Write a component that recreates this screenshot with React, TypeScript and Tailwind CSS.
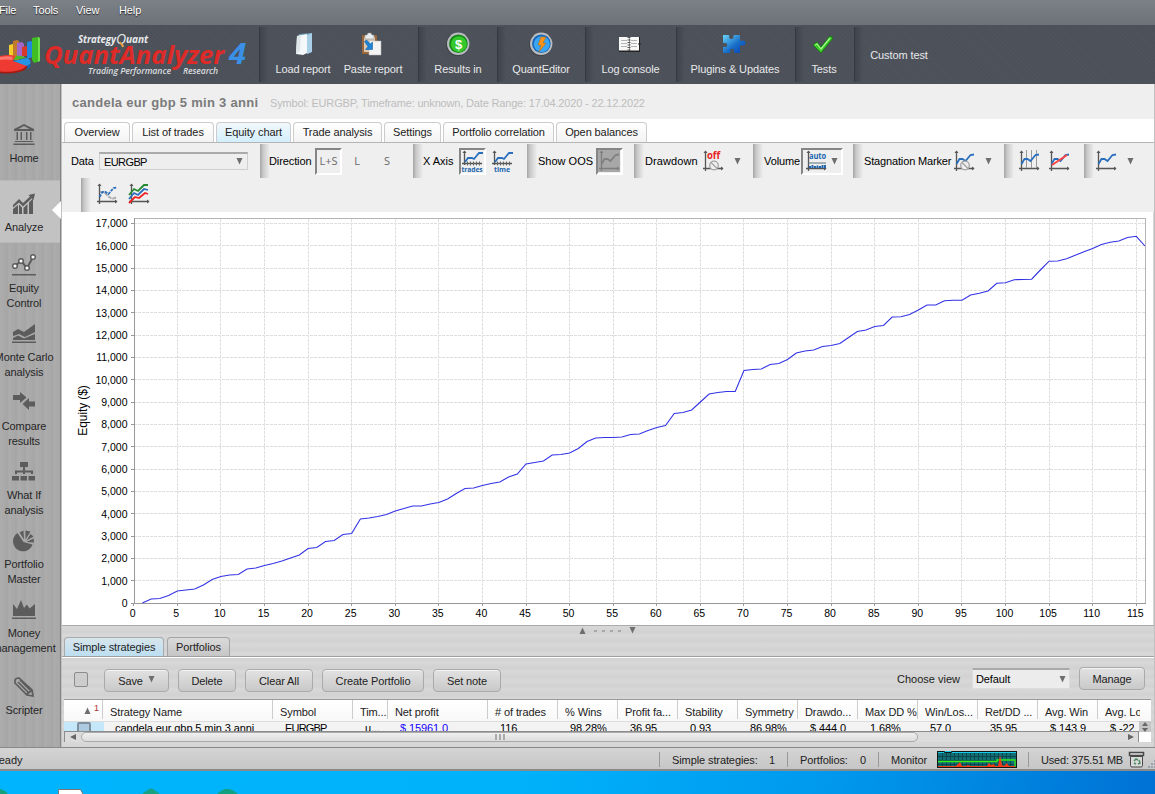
import React, { useState } from 'react'
import clsx from 'clsx'

const equity = [
  603, 599, 598.5, 595.5, 591, 590, 589, 585, 579.5, 576.5, 575, 574.5, 569, 568, 565.5, 563.5, 561, 558, 555, 548.5,
  547.5, 541.5, 540.5, 534.5, 533.5, 519, 518, 516.5, 514.5, 511, 508.5, 506, 506, 504, 502.5, 499, 493.5, 488.5, 488,
  485.5, 483.5, 482, 477, 474, 464, 462.5, 461, 455, 454.5, 453, 448.5, 441.5, 438, 437.5, 437.5, 437, 434.5, 434,
  430.5, 427.5, 425.5, 413.5, 412.5, 410, 402, 394, 392.5, 391.5, 391.5, 370.5, 369.5, 369, 364.5, 363.5, 359.5, 353,
  351, 350, 346.5, 345.5, 343.5, 337.5, 331.5, 330, 326.5, 325.5, 317, 316.8, 314.5, 310, 305, 305, 300.7, 300.3,
  300.2, 295, 293.3, 291, 283.3, 282.7, 279.7, 279.5, 279.2, 270, 261.2, 261, 258.8, 255.2, 251.7, 248.5, 244.5,
  242.3, 241, 237.5, 236.3, 246
]

const columns = [
  { title: 'Strategy Name', value: 'candela eur gbp 5 min 3 anni', width: 'w-[170px]' },
  { title: 'Symbol', value: 'EURGBP', width: 'w-[80px]' },
  { title: 'Tim...', value: 'u...', width: 'w-[35px]' },
  { title: 'Net profit', value: '$ 15961.0', width: 'w-[100px]' },
  { title: '# of trades', value: '116', width: 'w-[70px]' },
  { title: '% Wins', value: '98.28%', width: 'w-[60px]' },
  { title: 'Profit fa...', value: '36.95', width: 'w-[60px]' },
  { title: 'Stability', value: '0.93', width: 'w-[60px]' },
  { title: 'Symmetry', value: '86.98%', width: 'w-[60px]' },
  { title: 'Drawdo...', value: '$ 444.0', width: 'w-[60px]' },
  { title: 'Max DD %', value: '1.68%', width: 'w-[60px]' },
  { title: 'Win/Los...', value: '57.0', width: 'w-[60px]' },
  { title: 'Ret/DD ...', value: '35.95', width: 'w-[60px]' },
  { title: 'Avg. Win', value: '$ 143.9', width: 'w-[60px]' },
  { title: 'Avg. Lo', value: '$ -222', width: 'w-[42px]' }
]

const tabs = [
  { name: 'Overview', width: 'w-[66px]' },
  { name: 'List of trades', width: 'w-[82px]' },
  { name: 'Equity chart', width: 'w-[75px]' },
  { name: 'Trade analysis', width: 'w-[89px]' },
  { name: 'Settings', width: 'w-[57px]' },
  { name: 'Portfolio correlation', width: 'w-[111px]' },
  { name: 'Open balances', width: 'w-[91px]' }
]

function Arrow({ up = false, className = '' }: { up?: boolean; className?: string }) {
  return (
    <svg width="7" height="7" viewBox="0 0 7 7" className={clsx('shrink-0', className)}>
      <path d={up ? 'M3.5 0.500 6.500 7H.5z' : 'M.5 0h6L3.5 6.500z'} fill="#6e6e6e" />
    </svg>
  )
}

/* ---------- Top bar ---------- */

function Logo() {
  return (
    <svg width="259" height="59" viewBox="0 25 259 59" className="shrink-0">
      <path d="M9 45l4-1v16H9z" fill="#f4cf2c" />
      <path d="M13 41l4-1 2 1v19h-6z" fill="#c07a2c" />
      <path d="M17 43l5-1 2 2v14h-7z" fill="#a366cc" />
      <path d="M22 47l4-1 2 1v9h-6z" fill="#d8382a" />
      <path d="M27 42l4-1 2 1v15l-6 2z" fill="#2087df" />
      <path d="M32 38l6-1 2 1v23l-6 2-2-3z" fill="#40bd22" />
      <path d="M38 37l2 1v23l-2 1z" fill="#6fe04b" />
      <path d="M0 63h28q1 6-7 8.500-9 3-21 1.500z" fill="#a51912" />
      <path d="M0 56q10-2 15 0l-2 5 14 4q-3 5-14 6.500-7 .7-13 0z" fill="#ee3a30" />
      <path d="M0 57q9-1.500 13 0l-1 3q-6-1-12 0z" fill="#ff766e" />
      <path d="M13 60l4-4.500q6 0 9 2.500z" fill="#45bd26" />
      <path d="M13 61l14-3q5 2 3 6l-3 2z" fill="#2494e8" />
      <path d="M27 66l3.500-2v2.500l-3 3z" fill="#1466b5" />
      <g fontFamily="Open Sans" fontStyle="italic">
        <text x="78" y="43" fontSize="11" fontWeight="700" fill="#e8eaec" textLength="38" lengthAdjust="spacingAndGlyphs">Strategy</text>
        <text x="116" y="44" fontSize="14" fill="#e8eaec" textLength="10" lengthAdjust="spacingAndGlyphs">Q</text>
        <text x="126" y="43" fontSize="11" fontWeight="700" fill="#e8eaec" textLength="22" lengthAdjust="spacingAndGlyphs">uant</text>
        <path d="M120 42l3 5" stroke="#e99b2e" strokeWidth="1.5" />
        <text x="44" y="63.500" fontSize="25" fontWeight="700" fill="#de2b28" textLength="180" lengthAdjust="spacingAndGlyphs">QuantAnalyzer</text>
        <text x="229" y="63.500" fontSize="28" fontWeight="700" fill="#3a8fe6" textLength="17" lengthAdjust="spacingAndGlyphs">4</text>
        <text x="88" y="74" fontSize="9.5" fontWeight="600" fill="#d9dcdf" textLength="83" lengthAdjust="spacingAndGlyphs">Trading Performance</text>
        <text x="183" y="74" fontSize="9.5" fontWeight="600" fill="#d9dcdf" textLength="35" lengthAdjust="spacingAndGlyphs">Research</text>
      </g>
    </svg>
  )
}

const LoadIcon = () => (
  <svg width="24" height="24" viewBox="-3 0 24 24">
    <path d="M5 2l13-1v18l-4 3z" fill="#6f9fbf" />
    <path d="M3 4l10-2v19l-4 2-7-1z" fill="#f5f8fa" />
    <path d="M13 3l5-2v19l-5 2z" fill="#a9cfe6" />
    <path d="M3 4l4-1-1 16-4 3z" fill="#dfe6ea" />
  </svg>
)

const PasteIcon = () => (
  <svg width="24" height="24" viewBox="1 0 24 24">
    <rect x="2" y="3" width="15" height="19" rx="1" fill="#9b663a" />
    <rect x="4" y="5" width="11" height="15" fill="#d8c9b6" />
    <path d="M5 3h2l1-2h3l1 2h2v4H5z" fill="#e9ecee" stroke="#888" strokeWidth=".5" />
    <path d="M9 9h12v14H9z" fill="#f4f4f4" stroke="#bbb" strokeWidth=".5" />
    <path d="M4.500 9.500l2-1.500 4 4 2-2v7.500H5.500l2.500-3z" fill="#1b84d8" stroke="#0b4f8a" strokeWidth=".5" />
  </svg>
)

function CoinIcon({ blue = false }: { blue?: boolean }) {
  return (
    <svg width="24" height="24" viewBox="0 0 24 24">
      <circle cx="11.5" cy="12.5" r="11.5" fill="#3f4347" />
      <circle cx="12.2" cy="11.8" r="11.2" fill="#b9bcc0" />
      <circle cx="12.4" cy="11.7" r="9.3" fill={blue ? '#1565b8' : '#118512'} />
      <circle cx="12.8" cy="12.2" r="8" fill={blue ? '#3aa5f3' : '#35c82c'} />
      {blue ? (
        <path d="M12 5h5l-3 6h3l-7 9 2-7H9z" fill="#ff9416" stroke="#a86418" strokeWidth=".5" />
      ) : (
        <text x="12.500" y="16.500" fontSize="13" fontWeight="700" fill="#fff" textAnchor="middle">$</text>
      )}
    </svg>
  )
}

const LogIcon = () => (
  <svg width="24" height="24" viewBox="1 -1 24 24">
    <path d="M2 4h21v15H2z" fill="#222" />
    <path d="M2 4h10v13.500H2zM12.500 4H22v13.500h-9.500z" fill="#f7f7f7" />
    <path d="M4 7.500h6M4 10.500h6M4 13.500h6M14 7.500h6M14 10.500h6M14 13.500h6" stroke="#b3b3b3" />
    <path d="M12 4v14" stroke="#555" strokeWidth="3" strokeDasharray="1 1.5" />
    <path d="M21.500 11h2" stroke="#222" strokeWidth="2" />
  </svg>
)

const PuzzleIcon = () => (
  <svg width="24" height="24" viewBox="1 0 24 24">
    <defs>
      <linearGradient id="puzzle" x1="0" y1="0" x2="1" y2="1">
        <stop offset="0" stopColor="#6ad3f5" />
        <stop offset=".55" stopColor="#176dc8" />
        <stop offset="1" stopColor="#063fae" />
      </linearGradient>
    </defs>
    <path
      d="M1 3h5q2 0 1.200 2c-.8 2.600 5 2.600 4.200 0Q10.800 3 13 3h5v5q0 1.500 2 .8c4-1.500 5 5 1 4.800-2.400-.6-3-.2-3 1.600V21h-5q-1.600 0-1-2c.8-3-4.600-3-3.600 0q.6 2-1.400 2H1v-5q0-1.600 2-1c3 .6 3-4.600 0-4q-2 .6-2-1z"
      fill="url(#puzzle)"
    />
  </svg>
)

const CheckIcon = () => (
  <svg width="24" height="24" viewBox="1 -1 24 24">
    <path d="M2 12l4-3 4 5L19 3l3 2-12 15z" fill="#39c927" stroke="#12790d" strokeWidth=".8" />
    <path d="M4 12l2-1 4 5 9-11" fill="none" stroke="#a4f48e" strokeWidth="1.2" />
  </svg>
)

function TopButton({ label, icon, className }: { label: string; icon: React.ReactNode; className?: string }) {
  return (
    <button className={clsx('flex shrink-0 flex-col items-center whitespace-nowrap text-[#e8e9ea]', className)}>
      {icon}
      <span className="mt-[6px] leading-[14px]">{label}</span>
    </button>
  )
}

function TopGroup({ className, children }: { className: string; children?: React.ReactNode }) {
  return (
    <div className={clsx('flex shrink-0 justify-center border-l border-[#353a41] bg-[linear-gradient(90deg,#3f444c,transparent_8px)] pt-[5px]', className)}>
      {children}
    </div>
  )
}

function TopBar() {
  return (
    <div className="flex h-[59px] shrink-0 bg-[#4b5059] bg-[repeating-linear-gradient(45deg,#ffffff05_0px,#ffffff05_1px,transparent_1px,transparent_3px)]">
      <Logo />
      <div className="flex py-[2px]">
        <TopGroup className="w-[159px] pr-[1px]">
          <TopButton label="Load report" icon={<LoadIcon />} className="w-[57px]" />
          <TopButton label="Paste report" icon={<PasteIcon />} className="ml-3 w-[59px]" />
        </TopGroup>
        <TopGroup className="w-[79px]"><TopButton label="Results in" icon={<CoinIcon />} /></TopGroup>
        <TopGroup className="w-[88px] pr-px"><TopButton label="QuantEditor" icon={<CoinIcon blue />} /></TopGroup>
        <TopGroup className="w-[91px] pr-px"><TopButton label="Log console" icon={<LogIcon />} /></TopGroup>
        <TopGroup className="w-[119px] pr-[2px]"><TopButton label="Plugins & Updates" icon={<PuzzleIcon />} /></TopGroup>
        <TopGroup className="w-[59px] pr-[2px]"><TopButton label="Tests" icon={<CheckIcon />} /></TopGroup>
        <TopGroup className="w-[90px] items-center pr-px"><span className="mb-[5px] text-[#e8e9ea]">Custom test</span></TopGroup>
      </div>
    </div>
  )
}

/* ---------- Sidebar ---------- */

const sidebarItems = [
  {
    lines: ['Home'],
    box: 'h-[68px] pt-[11px]',
    icon: <path d="M12 1 22 6v2H2V6zM4.500 9h1.500v8H4.500zM8.500 9H10v8H8.500zM14 9h1.500v8H14zM18 9h1.500v8H18zM3 18h18v1H3zM1.500 20.500h21V22h-21zM12 3 6.500 6h11z" fillRule="evenodd" />
  },
  {
    lines: ['Analyze'],
    box: 'h-[63px] pt-[11px]',
    icon: <path d="M1 17l5-4v9H1zM7 12.500l3 3V22H7zM11.500 16l4-4v10h-4zM17 10.500l4-4V22h-4zM1 13l6-6 4 4 7-6.500L16.500 3 23 1.500 21.500 8l-1.700-1.700L11 14.500l-4-4-6 5z" />
  },
  {
    lines: ['Equity', 'Control'],
    box: 'h-[69px] pt-[10px]',
    icon: (
      <g>
        <path d="M3 13l6-5 6 7 6-11" fill="none" stroke="#5c5c5c" strokeWidth="2" />
        <g fill="#fff" stroke="#5c5c5c" strokeWidth="1.500">
          <circle cx="3" cy="13" r="2.300" /><circle cx="9" cy="8" r="2.300" /><circle cx="15" cy="15" r="2.300" /><circle cx="21" cy="4" r="2.300" />
        </g>
        <path d="M0 21h24v1.500H0z" />
      </g>
    )
  },
  {
    lines: ['Monte Carlo', 'analysis'],
    box: 'h-[69px] pt-[10px]',
    icon: <path d="M1 10l5-3 6 3 11-8v8l-10 5-6-3-6 2zM1 16l5-2.500 6 3L23 12v6H1zM0 19.500h24V21H0z" />
  },
  {
    lines: ['Compare', 'results'],
    box: 'h-[69px] pt-[10px]',
    icon: <path d="M1 4h7V1l6.500 5.500L8 12V9H1zM23 10.500h-6v-3.500l-6.500 6 6.500 6v-3.500h6z" />
  },
  {
    lines: ['What If', 'analysis'],
    box: 'h-[69px] pt-[10px]',
    icon: <path d="M8 2h8v5h-3v3.500h8V14h-2v-1.500h-6V14h-2v-1.500H5V14H3v-3.500h8V7H8zM0 16h7v4.500H0zM8.500 16h6.500v4.500H8.500zM16.500 16H23v4.500h-6.500z" />
  },
  {
    lines: ['Portfolio', 'Master'],
    box: 'h-[69px] pt-[10px]',
    icon: <path d="M11.500 13 5.500 4A10 10 0 1 0 20.500 15.500zM12 10.500 7.500 3.500 11.500 1.500zM13.500 10.500V1.500L18.500 2.500zM14.500 11.500 18.500 5l3 2.500zM14.500 13l7-3.500.5 4z" />
  },
  {
    lines: ['Money', 'management'],
    box: 'h-[69px] pt-[10px]',
    icon: <path d="M1 6l4 5 4-9 3 8 3-3.500 2.500 4L23 6v12H1zM0 19.500h24V21H0z" />
  },
  {
    lines: ['Scripter'],
    box: 'h-[69px] pt-[18px]',
    icon: (
      <g fill="none" stroke="#5c5c5c" strokeWidth="1.700">
        <path d="M3 6q0-3 4-3l13 12 1 6-6-1L3 8zM6 7l10 10M8 5l10 10M15 19l5-4" />
      </g>
    )
  }
]

function Sidebar() {
  return (
    <div className="relative w-[61px] shrink-0 border-r border-[#858585] bg-[#a9a9a9] bg-[repeating-linear-gradient(90deg,#ffffff08_0px,#ffffff08_2px,transparent_3px,transparent_5px,#00000006_7px,#ffffff08_9px)] pt-[28px]">
      {sidebarItems.map(item => (
        <button
          key={item.lines[0]}
          className={clsx(
            'flex w-full flex-col items-center overflow-hidden pr-[12px] whitespace-nowrap text-[#262626]',
            item.box,
            item.lines[0] === 'Analyze' && 'border-y border-[#b8b8b8] bg-[#c2c2c2]'
          )}
        >
          <svg width="24" height="24" viewBox="0 0 24 24" fill="#5c5c5c" className="shrink-0">{item.icon}</svg>
          <span className="mt-[4px] flex w-[48px] flex-col items-center">
            {item.lines.map(line => <span key={line} className="leading-[15px]">{line}</span>)}
          </span>
        </button>
      ))}
      <svg width="9" height="18" viewBox="0 0 9 18" className="absolute top-[117px] -right-px">
        <path d="M9 0v18L0 9z" fill="#fff" />
      </svg>
    </div>
  )
}

/* ---------- Chart toolbar ---------- */

type IconKind = 'plain' | 'trades' | 'time' | 'gray' | 'off' | 'auto' | 'stagnation' | 'grid' | 'trend' | 'shadow' | 'multi'

function ChartIcon({ kind = 'plain' }: { kind?: IconKind }) {
  const timeline = kind === 'trades' || kind === 'time'
  const axisY = timeline ? 13.5 : 18.5
  const gray = kind === 'gray'
  const axis = gray ? '#7d7d7d' : '#555'
  const line = gray ? '#808080' : '#2a6fbd'
  return (
    <svg width="22" height="22" viewBox="0 0 22 22" className="shrink-0 overflow-visible">
      {gray && <path d="M0 0h22v22H0z" fill="#a7a7a7" />}
      <path d={timeline ? 'M3.500 1v14M1 13.500h20' : `M3.500 1v20M1 ${axisY}h20`} stroke={axis} strokeWidth="1.300" />
      <path d="M1.500 3l2-2.500 2 2.500z" fill={axis} />
      {axisY > 15 && <path d="M19 16.500l2.500 2-2.500 2z" fill={axis} />}
      {kind === 'grid' && <path d="M8.500 0v18M13.500 0v18M18.500 0v18" stroke="#999" />}
      {kind === 'off' && <text x="5" y="9" fontSize="10" fontWeight="700" fontFamily="Open Sans" fill="#e82626" textLength="13" lengthAdjust="spacingAndGlyphs">off</text>}
      {kind === 'auto' && (
        <g>
          <text x="4" y="8.500" fontSize="8" fontWeight="700" fontFamily="Open Sans" fill="#2266b0" textLength="17" lengthAdjust="spacingAndGlyphs">auto</text>
          <path d="M3 13h18" stroke="#56707c" />
          <path d="M5 18v-2M7.500 18v-3M10 18v-2M12.500 18v-2.500M15 18v-2M17.500 18v-3M20 18v-3" stroke="#2266b0" strokeWidth="2" />
        </g>
      )}
      {kind === 'multi' && (
        <g fill="none" strokeWidth="1.800">
          <path d="M1 12l5-6 4 2 6-6h4" stroke="#248a32" />
          <path d="M1 16l5-6 4 2 6-6 4 1" stroke="#2a6fbd" />
          <path d="M1 20l6-6 4 1 6-5 3 1" stroke="#ee2222" />
        </g>
      )}
      {kind === 'shadow' && <path d="M4 9h4l4 4 4 3 5-2" fill="none" stroke="#aaa" strokeWidth="1.800" strokeDasharray="4 1" />}
      {kind !== 'off' && kind !== 'auto' && kind !== 'multi' && (
        <path d={timeline ? 'M4 12l3-4h4l2 1 5-6h4' : 'M3.500 14l3-5h3l3 2 5-6 3.500-.5'} fill="none" stroke={line} strokeWidth="1.800" strokeDasharray={kind === 'shadow' ? '3 1' : undefined} />
      )}
      {kind === 'trend' && <path d="M4 15L19 5" stroke="#f44" strokeWidth="2" />}
      {timeline && (
        <g>
          <path d="M6.500 11.500v4M9.500 11.500v4M12.500 11.500v4M15.500 11.500v4M18.500 11.500v4" stroke="#666" />
          <text x="11" y="21.500" textAnchor="middle" fontSize="7.500" fontWeight="700" fontFamily="Open Sans" fill="#2266b0" textLength={kind === 'trades' ? 21 : 16} lengthAdjust="spacingAndGlyphs">{kind}</text>
        </g>
      )}
      {(kind === 'stagnation' || kind === 'off') && (
        <g fill="#eee" stroke="#a3a3a3" strokeWidth="1.300"><circle cx="12" cy="15.500" r="4.300" /><path d="M9 12.500l6 6" /></g>
      )}
    </svg>
  )
}

function ToolGroup({ className, children }: { className: string; children: React.ReactNode }) {
  return (
    <div className={clsx('flex h-[34px] shrink-0 items-center bg-[linear-gradient(90deg,#a5a5a5,#c8c8c8_3px,#efefef_10px)] whitespace-nowrap', className)}>
      {children}
    </div>
  )
}

const pressed = 'flex h-[27px] shrink-0 items-center border-2 border-t-[#858585] border-r-white border-b-white border-l-[#858585]'

function ChartToolbar() {
  const [direction, setDirection] = useState('L+S')
  return (
    <div className="h-[69px] shrink-0 bg-[#efefef] pt-px text-black">
      <div className="flex">
        <div className="flex h-[34px] w-[198px] shrink-0 items-center pl-[9px]">
          <span className="w-[28px]">Data</span>
          <div className="flex h-[18px] w-[149px] items-center justify-between border border-t-2 border-[#d0d0d0] border-t-[#aaa] bg-[#eee] pr-[4px] pl-[4px]">
            <span className="tracking-[-0.6px]">EURGBP</span>
            <Arrow />
          </div>
        </div>
        <ToolGroup className="w-[153px] pl-[9px]">
          <span className="w-[46px]">Direction</span>
          {['L+S', 'L', 'S'].map(d => (
            <button
              key={d}
              onClick={() => setDirection(d)}
              className={clsx("shrink-0 justify-center font-['Open_Sans',sans-serif] text-[11px] text-[#6a6a6a]", direction === d ? pressed : 'h-[27px]', d === 'L+S' ? 'w-[27px]' : 'w-[30px]')}
            >
              {d}
            </button>
          ))}
        </ToolGroup>
        <ToolGroup className="w-[114px] pl-[10px]">
          <span className="w-[36px] tracking-normal">X Axis</span>
          <span className={clsx(pressed, 'w-[27px]')}><ChartIcon kind="trades" /></span>
          <span className="ml-[5px]"><ChartIcon kind="time" /></span>
        </ToolGroup>
        <ToolGroup className="w-[107px] pl-[11px]">
          <span className="w-[58px] tracking-normal">Show OOS</span>
          <span className={clsx(pressed, 'w-[27px]')}><ChartIcon kind="gray" /></span>
        </ToolGroup>
        <ToolGroup className="w-[119px] pl-[11px]">
          <span className="w-[57px] tracking-[0.1px]">Drawdown</span>
          <ChartIcon kind="off" />
          <Arrow className="ml-[10px]" />
        </ToolGroup>
        <ToolGroup className="w-[100px] pl-[11px]">
          <span className="w-[37px]">Volume</span>
          <span className={clsx(pressed, 'w-[42px] pl-[2px]')}>
            <ChartIcon kind="auto" />
            <Arrow className="ml-[4px]" />
          </span>
        </ToolGroup>
        <ToolGroup className="w-[151px] pl-[11px]">
          <span className="w-[89px] tracking-[-0.15px]">Stagnation Marker</span>
          <ChartIcon kind="stagnation" />
          <Arrow className="ml-[10px]" />
        </ToolGroup>
        <ToolGroup className="w-[80px] gap-[8px] pl-[14px]">
          <ChartIcon kind="grid" />
          <ChartIcon kind="trend" />
        </ToolGroup>
        <ToolGroup className="w-[66px] pl-[11px]">
          <ChartIcon />
          <Arrow className="ml-[10px]" />
        </ToolGroup>
      </div>
      <ToolGroup className="ml-[19px] gap-[10px] pb-[2px] pl-[15px]">
        <ChartIcon kind="shadow" />
        <ChartIcon kind="multi" />
      </ToolGroup>
    </div>
  )
}

/* ---------- Equity chart ---------- */

function EquityChart() {
  const px = (i: number) => 133.7 + i * 8.718
  const py = (v: number) => 603 - v * 22.33
  const xTicks = Array.from({ length: 24 }, (_, i) => i * 5)
  const yTicks = Array.from({ length: 18 }, (_, i) => i)
  return (
    <svg width="1091" height="413" viewBox="62 212 1091 413" className="block shrink-0 bg-white">
      <g stroke="#dedede" strokeDasharray="2.500 1.500" shapeRendering="crispEdges">
        {xTicks.slice(1).map(t => <path key={t} d={`M${Math.floor(px(t)) + 0.5} 219V603`} />)}
        {yTicks.slice(1).map(t => <path key={t} d={`M134 ${Math.floor(py(t)) + 0.5}H1145`} />)}
      </g>
      <g stroke="#999" shapeRendering="crispEdges">
        {xTicks.map(t => <path key={t} d={`M${Math.floor(px(t)) + 0.5} 603v3`} />)}
        {yTicks.map(t => <path key={t} d={`M131 ${Math.floor(py(t)) + 0.5}h3`} />)}
      </g>
      <rect x="134.5" y="218.5" width="1011" height="385" fill="none" stroke="#b4b4b4" />
      <path d="M134.500 218v386M134 603.500h1012" stroke="#999" />
      <g fontSize="10.500" fill="#000" className="tracking-normal">
        {xTicks.map(t => <text key={t} x={px(t) - 1} y="617" textAnchor="middle">{t}</text>)}
        {yTicks.map(t => <text key={t} x="127.500" y={py(t) + 4} textAnchor="end">{(t * 1000).toLocaleString('en-US')}</text>)}
      </g>
      <text transform="translate(87 410.5) rotate(-90)" textAnchor="middle" fontSize="12" fill="#000">Equity ($)</text>
      <polyline points={equity.map((y, i) => `${px(i + 1)},${y}`).join(' ')} fill="none" stroke="#3232e6" strokeWidth="1.100" />
    </svg>
  )
}

/* ---------- Strategies panel ---------- */

const metal = 'bg-[#d5d5d5] bg-[repeating-linear-gradient(180deg,#ffffff14_0px,#ffffff00_3px,#00000004_6px,#ffffff0c_9px)]'

function PushButton({ className, children }: { className: string; children: React.ReactNode }) {
  return (
    <button className={clsx('flex h-[23px] shrink-0 items-center justify-center rounded-[4px] border border-[#aaa] bg-linear-to-b from-[#e2e2e2] to-[#c9c9c9] whitespace-nowrap text-[#222] shadow-[inset_0_1px_0_#f3f3f3]', className)}>
      {children}
    </button>
  )
}

function Strategies() {
  return (
    <div className={clsx('flex h-[122px] shrink-0 flex-col overflow-hidden border-t border-[#aaa]', metal)}>
      <div className="flex h-[11px] items-start justify-center gap-[8px] pt-[1px] pr-[1px]">
        <Arrow up />
        <span className="mt-[3px] flex gap-[5px]">
          {[0, 1, 2, 3].map(i => <i key={i} className="h-[2px] w-[3px] bg-[#a8a8a8]" />)}
        </span>
        <Arrow />
      </div>
      <div className="flex h-[20px] shrink-0 gap-[3px] border-b border-[#a0a0a0] pl-[2px] leading-[19px]">
        <div className="w-[100px] rounded-t-[4px] border border-b-0 border-[#aaa] bg-linear-to-b from-[#d7e5ec] to-[#bcdff2] text-center text-[#222]">Simple strategies</div>
        <div className="w-[63px] rounded-t-[4px] border border-b-0 border-[#a5a5a5] bg-linear-to-b from-[#dadada] to-[#c6c6c6] text-center text-[#222]">Portfolios</div>
      </div>
      <div className="flex h-[42px] shrink-0 items-start border-t border-white pt-[11px] pl-[12px]">
        <span className="mt-[3px] mr-[16px] h-[15px] w-[14px] rounded-[2px] border-[1.500px] border-[#8c8c8c] bg-[#cdcdcd]" />
        <PushButton className="w-[65px] gap-[5px]">Save <Arrow className="mb-[3px]" /></PushButton>
        <PushButton className="ml-[9px] w-[58px]">Delete</PushButton>
        <PushButton className="ml-[9px] w-[68px]">Clear All</PushButton>
        <PushButton className="ml-[9px] w-[102px]">Create Portfolio</PushButton>
        <PushButton className="ml-[9px] w-[68px]">Set note</PushButton>
        <span className="mt-[3px] ml-auto w-[75px] tracking-normal text-[#222]">Choose view</span>
        <div className="-mt-px flex h-[21px] w-[98px] items-center justify-between border border-t-2 border-[#dcdcdc] border-t-[#aaa] bg-[#ececec] pr-[3px] pl-[3px] text-black">
          <span>Default</span>
          <Arrow />
        </div>
        <PushButton className="-mt-[2px] mr-[9px] ml-[9px] w-[66px]">Manage</PushButton>
      </div>
      <div className="mr-[3px] ml-[2px] flex h-[43px] shrink-0 flex-col overflow-hidden border-t border-[#999] text-[#222]">
        <div className="flex h-[21px] shrink-0 bg-linear-to-b from-white to-[#f8f8f8]">
          <div className="mb-[2px] flex w-[39px] shrink-0 items-center justify-end gap-[3px] border-r border-[#ccc] pr-[3px]">
            <Arrow up className="mt-[1px]" />
            <span className="mb-[4px] text-[9px] text-[#a33]">1</span>
          </div>
          {columns.map(c => (
            <div key={c.title} className={clsx('mb-[2px] shrink-0 overflow-hidden border-r border-[#ccc] pt-[6px] pl-[7px] leading-[13px] whitespace-nowrap last:border-r-0', c.width)}>{c.title}</div>
          ))}
        </div>
        <div className="flex h-[10px] shrink-0 overflow-hidden border-t border-[#ddd] bg-[#f3f3f3] text-black">
          <div className="flex w-[40px] shrink-0 justify-center bg-[#c5e7fa]">
            <span className="h-[16px] w-[14px] rounded-[2px] border-2 border-[#80919d] bg-[#adcbe0]" />
          </div>
          {columns.map(c => (
            <div
              key={c.title}
              className={clsx(
                'shrink-0 overflow-hidden pl-[11px] leading-[13px] whitespace-nowrap last:w-[35px]',
                c.width,
                c.title === 'Net profit' && 'text-[#1500ff]',
                c.title === 'Symbol' && 'tracking-[-0.8px]'
              )}
            >
              {c.value}
            </div>
          ))}
        </div>
        <div className="flex h-[12px] shrink-0">
          <div className="flex w-[1075px] items-center border border-[#8c8c8c] bg-[#dcdcdc]">
            <svg width="16" height="8" viewBox="0 0 16 8" className="shrink-0"><path d="M11 1v6L5 4z" fill="#666" /></svg>
            <div className="flex h-[10px] w-[837px] shrink-0 items-center justify-center rounded-full border border-[#aaa] bg-linear-to-b from-[#efefef] to-[#ddd]">
              <span className="flex gap-[2px]">
                {[0, 1, 2].map(i => <i key={i} className="h-[6px] w-[2px] bg-[#aaa]" />)}
              </span>
            </div>
            <svg width="12" height="8" viewBox="0 0 12 8" className="ml-auto shrink-0"><path d="M2 1v6l6-3z" fill="#666" /></svg>
          </div>
          <div className="relative flex-1 bg-white">
            <div className="absolute -top-[10px] right-0 flex h-[11px] w-[12px] flex-col items-center justify-center gap-px bg-[#c5c5c5]">
              <svg width="8" height="10" viewBox="0 0 8 10"><path d="M4 0l3 4H1zM4 10l3-4H1z" fill="#666" /></svg>
            </div>
          </div>
        </div>
      </div>
    </div>
  )
}

/* ---------- Status bar ---------- */

function StatusBar() {
  const rule = 'h-[15px] border-l border-[#999] shadow-[inset_1px_0_0_#e5e5e5] shrink-0'
  return (
    <div className="flex h-[24px] shrink-0 items-center overflow-hidden border-t border-b-2 border-[#8a8a8a] bg-linear-to-b from-[#d4d4d4] to-[#c6c6c6] pt-[2px] whitespace-nowrap text-[#222]">
      <span className="-ml-[9px] w-[668px] shrink-0">Ready</span>
      <i className={rule} />
      <span className="ml-[12px] w-[97px] shrink-0">Simple strategies:</span>
      <span className="w-[18px] shrink-0">1</span>
      <i className={rule} />
      <span className="ml-[12px] w-[60px] shrink-0">Portfolios:</span>
      <span className="w-[18px] shrink-0">0</span>
      <i className={rule} />
      <span className="ml-[12px] w-[46px] shrink-0">Monitor</span>
      <svg width="80" height="17" viewBox="0 0 80 17" className="shrink-0">
        <path d="M0 0h80v17H0z" fill="#101717" />
        <path d="M1 2h78v14H1z" fill="#126d74" />
        <path d="M5.500 2v14M9.500 2v14M13.500 2v14M17.500 2v14M21.500 2v14M25.500 2v14M29.500 2v14M33.500 2v14M37.500 2v14M41.500 2v14M45.500 2v14M49.500 2v14M53.500 2v14M57.500 2v14M61.500 2v14M65.500 2v14M69.500 2v14M73.500 2v14M1 5.500h78M1 9.500h78M1 13.500h78" stroke="#0a474d" />
        <path d="M1 1.500h6l1-1h6l1 1h64" fill="none" stroke="#19c9e8" />
        <path d="M1 10.500h59v-1.500h18v7" fill="none" stroke="#35ef1d" strokeWidth="1.300" />
        <path d="M1 16v-1h18l2-2 2-2 2 4h4l2-1 2 1h17l2-3 2 2 3-1 1 2h3l2-11 2 10 2 1 3-3 2 3h6v1z" fill="#f13c16" />
      </svg>
      <i className={clsx(rule, 'ml-[11px]')} />
      <span className="ml-[12px] w-[87px] shrink-0 tracking-[-0.2px]">Used: 375.51 MB</span>
      <svg width="17" height="17" viewBox="0 0 17 17" className="shrink-0">
        <path d="M2.500 5.500h12v9q0 1.500-1.500 1.500H4q-1.500 0-1.500-1.500z" fill="#dadada" stroke="#484848" />
        <path d="M1.500 1.500h14v3h-14z" fill="#e1e1e1" stroke="#484848" strokeWidth="1.500" />
        <path d="M6 10l2-2 2 1M11 9l1 3-2 1M8 13l-2-1" fill="none" stroke="#4b8b63" strokeWidth="1.500" />
      </svg>
      <svg width="9" height="9" viewBox="0 0 9 9" className="mt-auto ml-[2px] shrink-0" fill="#9ca3ad">
        <path d="M7 0h2v2H7zM4 3h2v2H4zM7 3h2v2H7zM1 6h2v2H1zM4 6h2v2H4zM7 6h2v2H7z" />
      </svg>
    </div>
  )
}

export default function App() {
  const [activeTab, setActiveTab] = useState('Equity chart')

  return (
    <div className="flex h-[794px] w-[1155px] flex-col overflow-hidden bg-[#d5d5d5] font-['Liberation_Sans',sans-serif] text-[11px] leading-[14px] tracking-[-0.1px]">
      {/* Menu */}
      <div className="flex h-[25px] shrink-0 items-start bg-linear-to-b from-[#7c8087] to-[#6d7178] pt-[3px] text-white [text-shadow:0_1px_1px_#222]">
        <span className="-ml-px w-[34px]">File</span>
        <span className="w-[43px]">Tools</span>
        <span className="w-[43px]">View</span>
        <span>Help</span>
      </div>

      <TopBar />

      <div className="flex h-[663px] shrink-0">
        <Sidebar />
        <div className="flex w-[1094px] flex-col border-r border-l border-[#c0c0c0]">
          <div className="flex h-[35px] shrink-0 items-center gap-[12px] bg-[#efefef] pt-[3px] pl-[10px] whitespace-nowrap">
            <h1 className="w-[186px] text-[13px] font-bold tracking-[0.28px] text-[#7b7b7b]">candela eur gbp 5 min 3 anni</h1>
            <span className="tracking-[-0.17px] text-[#bdbdbd]">Symbol: EURGBP, Timeframe: unknown, Date Range: 17.04.2020 - 22.12.2022</span>
          </div>

          {/* Tabs */}
          <div className="flex h-[24px] shrink-0 items-end gap-[2px] border-b border-[#b5b5b5] bg-white pl-[2px]">
            {tabs.map(({ name, width }) => (
              <button
                key={name}
                onClick={() => setActiveTab(name)}
                className={clsx(
                  'h-[20px] shrink-0 rounded-t-[4px] border border-b-0 border-[#ccc] pb-px text-center whitespace-nowrap text-[#222]',
                  width,
                  activeTab === name ? 'bg-linear-to-b from-[#f2f8fb] to-[#d2effc]' : 'bg-linear-to-b from-white to-[#f3f3f3]'
                )}
              >
                {name}
              </button>
            ))}
          </div>

          <ChartToolbar />
          <EquityChart />
          <Strategies />
        </div>
      </div>

      <StatusBar />

      {/* Desktop taskbar */}
      <div className="flex h-[23px] shrink-0 items-end bg-[linear-gradient(100deg,#00b5fd_0%,#00b2fa_45%,#0098ed_72%,#0072d5_100%)]">
        <svg width="240" height="6" viewBox="0 0 240 6">
          <path d="M0 1q5 1 8 5H0z" fill="#14a07d" />
          <path d="M58.500 7V1.500h22l3 5.500" fill="#fff" stroke="#777" />
          <path d="M142 6l7-5q2-1 4 0l7 5z" fill="#18a283" />
          <path d="M217 6q4-4 8-5h4q5 1 9 5z" fill="#11a181" />
        </svg>
      </div>
    </div>
  )
}
